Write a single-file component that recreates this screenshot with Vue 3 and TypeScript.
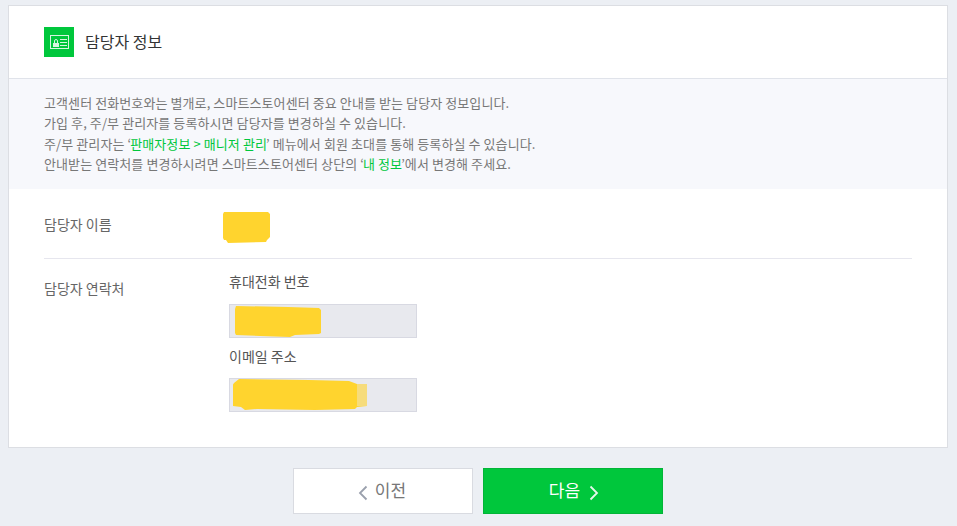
<script setup lang="ts">
const notices = [
  [{ text: '고객센터 전화번호와는 별개로, 스마트스토어센터 중요 안내를 받는 담당자 정보입니다.' }],
  [{ text: '가입 후, 주/부 관리자를 등록하시면 담당자를 변경하실 수 있습니다.' }],
  [
    { text: '주/부 관리자는 ‘' },
    { text: '판매자정보 > 매니저 관리', em: true },
    { text: '’ 메뉴에서 회원 초대를 통해 등록하실 수 있습니다.' },
  ],
  [
    { text: '안내받는 연락처를 변경하시려면 스마트스토어센터 상단의 ‘' },
    { text: '내 정보', em: true },
    { text: '’에서 변경해 주세요.' },
  ],
]
</script>

<template>
  <div class="page">
    <section class="card">
      <header class="card__head">
        <span class="card__icon">
          <svg width="19" height="14" viewBox="0 0 19 14" fill="none">
            <rect x="0.5" y="0.5" width="18" height="13" stroke="#d6f5df" />
            <path d="M3 12V8h6v4z" fill="#d6f5df" />
            <path d="M4.500 8V6a1.500 1.500 0 0 1 3 0v2" stroke="#d6f5df" />
            <path d="M10 4.500h7M10 7.500h7M10 10.500h7" stroke="#d6f5df" />
          </svg>
        </span>
        <h1 class="card__title">담당자 정보</h1>
      </header>

      <div class="notice">
        <p v-for="(line, i) in notices" :key="i" class="notice__line">
          <template v-for="(part, j) in line" :key="j">
            <em v-if="part.em" class="notice__em">{{ part.text }}</em>
            <template v-else>{{ part.text }}</template>
          </template>
        </p>
      </div>

      <div class="form">
        <div class="row row--name">
          <div class="row__label">담당자 이름</div>
          <div class="row__value">
            <svg class="mask mask--name" width="47" height="31" viewBox="0 0 47 31">
              <path d="M1 0h44l2 2v23l-3 3-1 2-38 1-2-3H1l-1-2V2z" fill="#ffd42e" />
            </svg>
          </div>
        </div>
        <div class="row row--contact">
          <div class="row__label">담당자 연락처</div>
          <div class="row__value">
            <div class="field__label field__label--first">휴대전화 번호</div>
            <div class="field__box">
              <svg class="mask" width="86" height="31" viewBox="0 0 86 31">
                <path d="M1 0l52 1 31 1 2 2v23l-2 1-24 1-5 2-30-1-24-1-1-2V3z" fill="#ffd42e" />
              </svg>
            </div>
            <div class="field__label field__label--second">이메일 주소</div>
            <div class="field__box">
              <svg class="mask mask--email" width="134" height="32" viewBox="0 0 134 32">
                <path d="M6 0l70 1 40 1 8 3h10v22l-10 1-2 2-40 1-58-1-12 1-4-3-8-1-1-20 2-3z" fill="#ffd42e" />
                <path d="M124 5h10v22h-10z" fill="#f6dc7c" />
              </svg>
            </div>
          </div>
        </div>
      </div>
    </section>

    <div class="actions">
      <button class="btn btn--prev" type="button">
        <svg width="10" height="16" viewBox="0 0 10 16" fill="none">
          <path d="M8.500 1.500 2 8l6.500 6.500" stroke="#9aa0ad" stroke-width="1.800" />
        </svg>
        이전
      </button>
      <button class="btn btn--next" type="button">
        다음
        <svg width="10" height="16" viewBox="0 0 10 16" fill="none">
          <path d="M1.500 1.500 8 8l-6.500 6.500" stroke="#e6f8ec" stroke-width="1.800" />
        </svg>
      </button>
    </div>
  </div>
</template>

<style>
html,
body {
  background: #eceff4;
}
</style>

<style scoped>
.page {
  width: 957px;
  height: 526px;
  padding: 5px 9px 0 8px;
  box-sizing: border-box;
  overflow: hidden;
  font-family: "Noto Sans CJK KR", "Liberation Sans", sans-serif;
}

.card {
  height: 443px;
  box-sizing: border-box;
  background: #fff;
  border: 1px solid #dcdee3;
}

.card__head {
  display: flex;
  align-items: center;
  height: 72px;
  padding-left: 35px;
  border-bottom: 1px solid #e0e3ea;
}

.card__icon {
  display: flex;
  align-items: center;
  justify-content: center;
  width: 30px;
  height: 30px;
  background: #00c73c;
}

.card__title {
  margin: -2px 0 0 11px;
  font-size: 16px;
  font-weight: 400;
  color: #333;
}

.notice {
  height: 110px;
  box-sizing: border-box;
  padding: 14px 35px 0;
  background: #f7f8fc;
}

.notice__line {
  margin: 0;
  font-size: 13px;
  line-height: 20.300px;
  letter-spacing: 0.09px;
  color: #777;
}

.notice__em {
  margin: 0 -1px;
  font-style: normal;
  color: #00c73c;
}

.form {
  padding: 0 35px;
}

.row {
  display: flex;
}

.row--name {
  height: 69px;
  align-items: center;
  border-bottom: 1px solid #e6e6ee;
}

.row--contact {
  padding-top: 12px;
}

.row__label {
  width: 185px;
  font-size: 14px;
  color: #666;
}

.row--contact .row__label {
  padding-top: 7px;
}

.row__value {
  flex: 1;
}

.field__label {
  font-size: 14px;
  line-height: 20px;
  color: #555;
}

.field__label--first {
  padding-bottom: 1px;
}

.field__label--second {
  margin-top: 8px;
}

.field__box {
  width: 188px;
  height: 34px;
  margin-top: 12px;
  box-sizing: border-box;
  background: #e8e9ee;
  border: 1px solid #d8d9e2;
  display: flex;
  align-items: center;
}

.mask {
  display: block;
  flex: none;
  margin-left: 5px;
}

.mask--name {
  margin: 8px 0 0 -6px;
}

.mask--email {
  margin-left: 3px;
}

.actions {
  display: flex;
  justify-content: center;
  gap: 10px;
  margin-top: 20px;
}

.btn {
  display: flex;
  align-items: center;
  justify-content: center;
  gap: 7px;
  width: 180px;
  height: 46px;
  padding: 0 0 3px;
  box-sizing: border-box;
  font-family: inherit;
  font-size: 17px;
}

.btn svg {
  margin-top: 6px;
}

.btn--prev {
  padding-right: 2px;
  background: #fff;
  border: 1px solid #d9dbe1;
  color: #777;
}

.btn--next {
  gap: 9px;
  padding-left: 2px;
  background: #00c73c;
  border: 1px solid #02b538;
  color: #fff;
}
</style>
